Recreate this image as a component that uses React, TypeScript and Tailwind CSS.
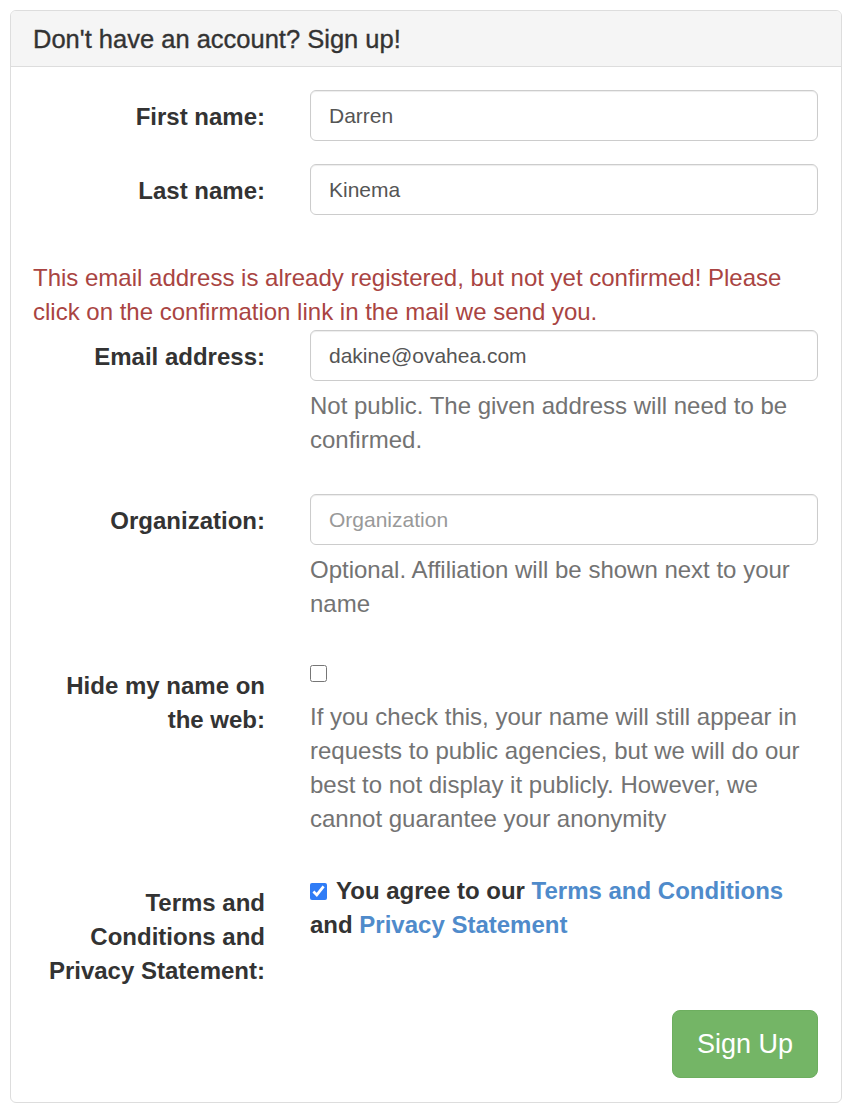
import { useState } from 'react';

const font = { fontFamily: '"Liberation Sans", Arial, Helvetica, sans-serif' };

function Label({ children, pt }: { children: React.ReactNode; pt: string }) {
  return (
    <label className={`w-[232px] shrink-0 text-right font-bold text-[#333] ${pt}`}>{children}</label>
  );
}

const inputCls =
  'w-full h-[51px] px-[18px] rounded-[6px] border border-[#ccc] bg-white text-[21px] text-[#555] placeholder:text-[#999] shadow-[inset_0_1px_1px_rgba(0,0,0,0.075)] outline-none';

export default function App() {
  const [first, setFirst] = useState('Darren');
  const [last, setLast] = useState('Kinema');
  const [email, setEmail] = useState('dakine@ovahea.com');
  const [org, setOrg] = useState('');
  const [hide, setHide] = useState(false);
  const [terms, setTerms] = useState(true);

  return (
    <div style={font} className="bg-white min-h-[1118px] pt-[10px] pl-[10px] text-[24px] leading-[34px] text-[#333]">
      <div className="w-[832px] border border-[#ddd] rounded-[6px] overflow-hidden">
        <div className="h-[56px] bg-[#f5f5f5] border-b border-[#ddd] px-[22px] flex items-center">
          <h3 className="text-[25.5px] font-medium text-[#333] [-webkit-text-stroke:0.35px_#333]">Don't have an account? Sign up!</h3>
        </div>

        <div className="pt-[23px] pb-[24px] pl-[22px] pr-[23px]">
          {/* names */}
          <div className="flex gap-[45px] mb-[23px]">
            <Label pt="pt-[10px]">First name:</Label>
            <div className="flex-1">
              <input className={inputCls} value={first} onChange={e => setFirst(e.target.value)} />
            </div>
          </div>
          <div className="flex gap-[45px]">
            <Label pt="pt-[10px]">Last name:</Label>
            <div className="flex-1">
              <input className={inputCls} value={last} onChange={e => setLast(e.target.value)} />
            </div>
          </div>

          <p className="mt-[46px] text-[#a94442]">
            This email address is already registered, but not yet confirmed! Please click on the confirmation link in the mail we send you.
          </p>

          {/* email */}
          <div className="flex gap-[45px] mt-px">
            <Label pt="pt-[10px]">Email address:</Label>
            <div className="flex-1">
              <input className={inputCls} value={email} onChange={e => setEmail(e.target.value)} />
              <p className="mt-[8px] text-[#737373]">Not public. The given address will need to be confirmed.</p>
            </div>
          </div>

          {/* organization */}
          <div className="flex gap-[45px] mt-[37px]">
            <Label pt="pt-[10px]">Organization:</Label>
            <div className="flex-1">
              <input className={inputCls} placeholder="Organization" value={org} onChange={e => setOrg(e.target.value)} />
              <p className="mt-[8px] text-[#737373]">Optional. Affiliation will be shown next to your name</p>
            </div>
          </div>

          {/* hide name */}
          <div className="flex gap-[45px] mt-[41px]">
            <Label pt="pt-[7px]">Hide my name on the web:</Label>
            <div className="flex-1">
              <input
                type="checkbox"
                checked={hide}
                onChange={e => setHide(e.target.checked)}
                className="block m-0 mt-[3px] w-[17px] h-[17px] accent-[#2f7cf6]"
              />
              <p className="mt-[18px] text-[#737373]">
                If you check this, your name will still appear in requests to public agencies, but we will do our best to not display it publicly. However, we cannot guarantee your anonymity
              </p>
            </div>
          </div>

          {/* terms */}
          <div className="flex gap-[45px] mt-[38px]">
            <Label pt="pt-[12px]">Terms and Conditions and Privacy Statement:</Label>
            <div className="flex-1 font-bold">
              <input
                type="checkbox"
                checked={terms}
                onChange={e => setTerms(e.target.checked)}
                className="m-0 mr-[9px] w-[17px] h-[17px] align-[-1px] accent-[#2f7cf6]"
              />
              You agree to our <a href="#" className="text-[#4f8bcb]">Terms and Conditions</a> and{' '}
              <a href="#" className="text-[#4f8bcb]">Privacy Statement</a>
            </div>
          </div>

          <div className="flex justify-end mt-[22px]">
            <button className="h-[68px] px-[24px] rounded-[8px] border border-[#6dae5f] bg-[#74b566] text-white text-[27px] leading-[36px]">
              Sign Up
            </button>
          </div>
        </div>
      </div>
    </div>
  );
}
